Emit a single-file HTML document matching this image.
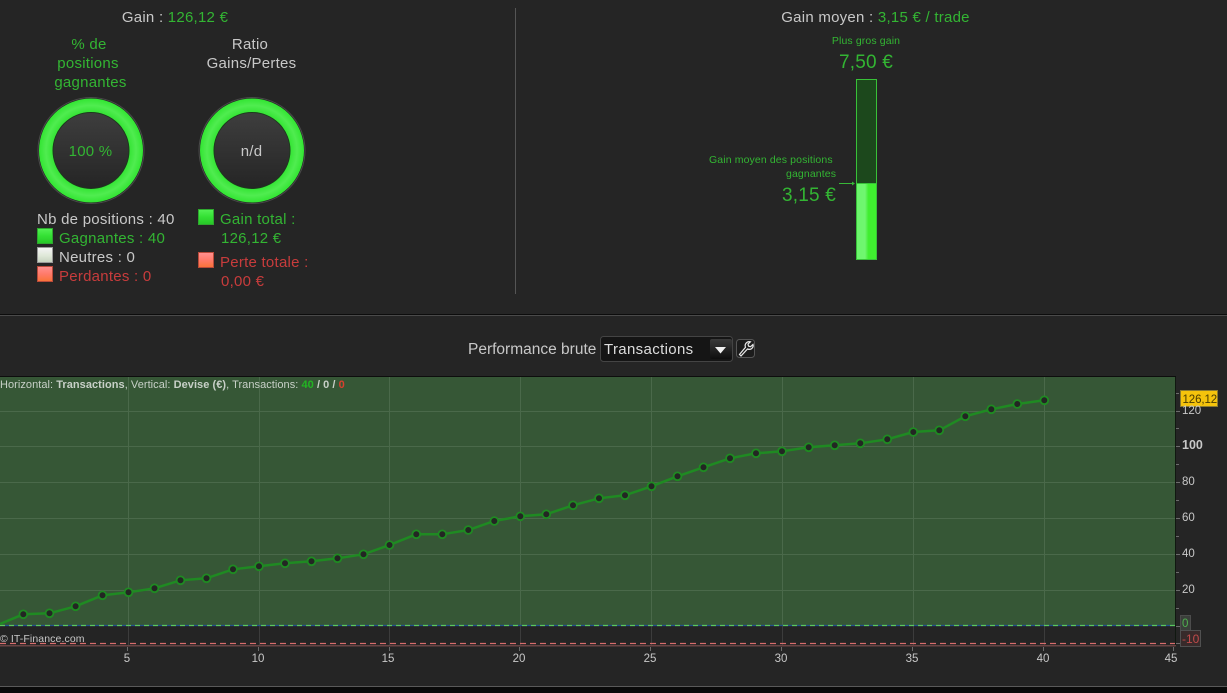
<!DOCTYPE html>
<html lang="fr"><head><meta charset="utf-8"><title>Performance</title>
<style>
html,body{margin:0;padding:0;background:#252525;}
body{position:relative;width:1227px;height:693px;overflow:hidden;font-family:"Liberation Sans",Arial,sans-serif;color:#c8c8c8;}
.t{position:absolute;white-space:nowrap;font-size:15px;line-height:19px;letter-spacing:.25px;}
.c{transform:translateX(-50%);}
.g{color:#33b533;}.w{color:#c8c8c8;}.d{color:#c83c3c;}
.sq{position:absolute;width:14px;height:14px;border:1px solid #333;}
.sg{background:linear-gradient(#52f052,#34e034 50%,#28c828);border-color:#2ea82e;}
.sw{background:linear-gradient(#f4f4f4,#dfe8d8 55%,#c8d4c0);border-color:#999;}
.sr{background:linear-gradient(#ff8f8f,#ff7a6a 50%,#f9743a);border-color:#b84a3a;}
.x{font-size:11.500px;line-height:13px;letter-spacing:0;top:653px;}
.y{font-size:11.500px;line-height:13px;letter-spacing:0;left:1182px;}
svg{position:absolute;left:0;top:0;}
</style></head><body>
<svg width="1227" height="693" viewBox="0 0 1227 693" xmlns="http://www.w3.org/2000/svg">
<defs>
<radialGradient id="ring" gradientUnits="userSpaceOnUse" cx="0" cy="0" r="53">
<stop offset=".72" stop-color="#34e434"/><stop offset=".85" stop-color="#50ec50"/><stop offset="1" stop-color="#2ee42e"/>
</radialGradient>
<linearGradient id="hub" x1="0" y1="0" x2="0" y2="1"><stop offset="0" stop-color="#3e3e3e"/><stop offset="1" stop-color="#252525"/></linearGradient>
<linearGradient id="bar" x1="0" y1="0" x2="1" y2="0"><stop offset="0" stop-color="#6cf66c"/><stop offset=".42" stop-color="#70f670"/><stop offset=".6" stop-color="#40ee30"/><stop offset="1" stop-color="#3ff02f"/></linearGradient>
<linearGradient id="btn" x1="0" y1="0" x2="0" y2="1"><stop offset="0" stop-color="#3a3a3a"/><stop offset="1" stop-color="#0e0e0e"/></linearGradient>
</defs>
<rect x="515" y="8" width="1" height="286" fill="#555"/>
<rect x="0" y="314" width="1227" height="1" fill="#0c0c0c"/>
<rect x="0" y="315" width="1227" height="1" fill="#4a4a4a"/>
<g transform="translate(91 150.500)"><circle r="53" fill="#222" stroke="#4a4a4a" stroke-width="1"/><circle r="52" fill="url(#ring)"/><circle r="38" fill="url(#hub)" stroke="#1c3a1c" stroke-width="1"/></g>
<g transform="translate(252 150.500)"><circle r="53" fill="#222" stroke="#4a4a4a" stroke-width="1"/><circle r="52" fill="url(#ring)"/><circle r="38" fill="url(#hub)" stroke="#1c3a1c" stroke-width="1"/></g>
<rect x="856.500" y="79.500" width="20" height="180" fill="#1c481c" stroke="#38c238"/>
<rect x="857" y="184" width="19" height="75" fill="url(#bar)"/>
<rect x="857" y="183" width="19" height="1" fill="#38c238"/>
<path d="M839 183.500H854" fill="none" stroke="#38b838" stroke-width="1"/>
<path d="M855 183.500l-3-2v4z" fill="#38b838"/>
<rect x="600.500" y="336.500" width="132" height="25" rx="3" fill="#151515" stroke="#444"/>
<rect x="710" y="339" width="22" height="20" rx="2" fill="url(#btn)"/>
<path d="M715 347h11l-5.500 6.500z" fill="#f0f0f0"/>
<rect x="736.500" y="339.500" width="18" height="18" rx="3" fill="#1c1c1c" stroke="#555"/>
<path d="M739.500 354.500l1.500 1.500 6.500-7c2 .7 4 .2 5-1.300.7-1 .8-2.200.5-3.200l-2.500 2.200-2-.6-.5-2 2.400-2.300c-1.500-.4-3-.1-4 1-1.200 1.200-1.500 3-.9 4.500z" fill="none" stroke="#e8e8e8" stroke-width="1.200"/>
<rect x="0" y="376" width="1176" height="1" fill="#0d0d0d"/>
<rect x="0" y="377" width="1175" height="249" fill="#365736"/>
<rect x="0" y="626" width="1175" height="19" fill="#242424"/>
<rect x="1175" y="377" width="1" height="270" fill="#101810"/>
<g stroke="#4a694a" stroke-width="1" fill="none">
<path d="M0 411.500H1175M0 446.500H1175M0 482.500H1175M0 518.500H1175M0 554.500H1175M0 590.500H1175"/>
<path d="M128.500 377V626M259.500 377V626M389.500 377V626M520.500 377V626M651.500 377V626M782.500 377V626M913.500 377V626M1044.500 377V626"/>
</g>
<g stroke="#3c3c3c" stroke-width="1" fill="none"><path d="M128.500 626V645M259.500 626V645M389.500 626V645M520.500 626V645M651.500 626V645M782.500 626V645M913.500 626V645M1044.500 626V645"/></g>
<path d="M0 625.500H1175" stroke="#24508c" stroke-width="1.200"/>
<path d="M0 625.500H1175" stroke="#5cc85c" stroke-width="1.200" stroke-dasharray="5 4"/>
<path d="M0 643.500H1175" stroke="#d86c6c" stroke-width="1.200" stroke-dasharray="6 4"/>
<rect x="0" y="645" width="1176" height="1.500" fill="#6a4545"/>
<g stroke="#6c6c6c" stroke-width="1" fill="none">
<path d="M127.500 647V651M258.500 647V651M389.500 647V651M519.500 647V651M650.500 647V651M781.500 647V651M912.500 647V651M1043.500 647V651M1173.500 647V651"/>
<path d="M1176 411.500H1180M1176 446.500H1180M1176 482.500H1180M1176 518.500H1180M1176 554.500H1180M1176 590.500H1180M1176 393.500H1179M1176 428.500H1179M1176 464.500H1179M1176 500.500H1179M1176 536.500H1179M1176 572.500H1179M1176 608.500H1179M1176 626.500H1180M1176 643.500H1180"/>
</g>
<polyline fill="none" stroke="#1f8a22" stroke-width="2.500" points="0,624 23.300,614.300 49.500,613.300 75.600,606.300 102.500,595.300 128.500,592.300 154.500,588.300 180.500,580.300 206.500,578.300 233,569.300 259,566.300 285,563.300 311.500,561.300 337.500,558.300 363.500,554.300 389.500,545 416.300,534.300 442.300,534.300 468.300,530 494.300,521 520.300,516.300 546.300,514.300 573,505.300 599,498.300 625,495.300 651.500,486.300 677.500,476.300 703.500,467.300 730,458.300 756,453.300 782,451.300 808.700,447.300 834.700,445.300 860.300,443.300 887.300,439.300 913.300,432 939.300,430.300 965.300,416.300 991.300,409.300 1017.300,404 1044.300,400.300"/>
<g fill="#232623" stroke="#1f8a22" stroke-width="1.800">
<circle cx="23.300" cy="614.300" r="3.900"/><circle cx="49.500" cy="613.300" r="3.900"/><circle cx="75.600" cy="606.300" r="3.900"/><circle cx="102.500" cy="595.300" r="3.900"/><circle cx="128.500" cy="592.300" r="3.900"/><circle cx="154.500" cy="588.300" r="3.900"/><circle cx="180.500" cy="580.300" r="3.900"/><circle cx="206.500" cy="578.300" r="3.900"/><circle cx="233" cy="569.300" r="3.900"/><circle cx="259" cy="566.300" r="3.900"/><circle cx="285" cy="563.300" r="3.900"/><circle cx="311.500" cy="561.300" r="3.900"/><circle cx="337.500" cy="558.300" r="3.900"/><circle cx="363.500" cy="554.300" r="3.900"/><circle cx="389.500" cy="545" r="3.900"/><circle cx="416.300" cy="534.300" r="3.900"/><circle cx="442.300" cy="534.300" r="3.900"/><circle cx="468.300" cy="530" r="3.900"/><circle cx="494.300" cy="521" r="3.900"/><circle cx="520.300" cy="516.300" r="3.900"/><circle cx="546.300" cy="514.300" r="3.900"/><circle cx="573" cy="505.300" r="3.900"/><circle cx="599" cy="498.300" r="3.900"/><circle cx="625" cy="495.300" r="3.900"/><circle cx="651.500" cy="486.300" r="3.900"/><circle cx="677.500" cy="476.300" r="3.900"/><circle cx="703.500" cy="467.300" r="3.900"/><circle cx="730" cy="458.300" r="3.900"/><circle cx="756" cy="453.300" r="3.900"/><circle cx="782" cy="451.300" r="3.900"/><circle cx="808.700" cy="447.300" r="3.900"/><circle cx="834.700" cy="445.300" r="3.900"/><circle cx="860.300" cy="443.300" r="3.900"/><circle cx="887.300" cy="439.300" r="3.900"/><circle cx="913.300" cy="432" r="3.900"/><circle cx="939.300" cy="430.300" r="3.900"/><circle cx="965.300" cy="416.300" r="3.900"/><circle cx="991.300" cy="409.300" r="3.900"/><circle cx="1017.300" cy="404" r="3.900"/><circle cx="1044.300" cy="400.300" r="3.900"/>
</g>
<rect x="1180.500" y="390.500" width="37" height="16" fill="#f5c30c" stroke="#8a7a30"/>
<rect x="1180.500" y="615.500" width="10" height="15" fill="#3a3f3a" stroke="#4c4c4c"/>
<rect x="1180.500" y="630.500" width="20" height="16" fill="#382a2a" stroke="#505050"/>
<rect x="0" y="686" width="1227" height="1" fill="#5a5a5a"/>
<rect x="0" y="687" width="1227" height="6" fill="#0a0a0a"/>
</svg>

<div class="t c" style="left:175px;top:8px">Gain : <span class="g">126,12 €</span></div>
<div class="t c g" style="left:89px;top:35px">% de</div>
<div class="t c g" style="left:88px;top:54px">positions</div>
<div class="t c g" style="left:90.500px;top:73px">gagnantes</div>
<div class="t c" style="left:250px;top:35px">Ratio</div>
<div class="t c" style="left:251.500px;top:54px">Gains/Pertes</div>
<div class="t c g" style="left:90.500px;top:142px">100 %</div>
<div class="t c" style="left:251.500px;top:142px">n/d</div>

<div class="t" style="left:37px;top:210px">Nb de positions : 40</div>
<div class="sq sg" style="left:37px;top:228px"></div>
<div class="t g" style="left:59px;top:229px">Gagnantes : 40</div>
<div class="sq sw" style="left:37px;top:247px"></div>
<div class="t" style="left:59px;top:248px">Neutres : 0</div>
<div class="sq sr" style="left:37px;top:266px"></div>
<div class="t d" style="left:59px;top:267px">Perdantes : 0</div>

<div class="sq sg" style="left:198px;top:209px"></div>
<div class="t g" style="left:220px;top:210px">Gain total :</div>
<div class="t g" style="left:221px;top:229px">126,12 €</div>
<div class="sq sr" style="left:198px;top:252px"></div>
<div class="t d" style="left:220px;top:253px">Perte totale :</div>
<div class="t d" style="left:221px;top:272px">0,00 €</div>

<div class="t c" style="left:875.500px;top:8px">Gain moyen : <span class="g">3,15 € / trade</span></div>
<div class="t c g" style="left:866px;top:32px;font-size:10.500px;letter-spacing:.12px">Plus gros gain</div>
<div class="t c g" style="left:866px;top:52px;font-size:19px;line-height:21px;letter-spacing:.2px">7,50 €</div>
<div class="t g" style="left:709px;top:151px;font-size:10.500px;letter-spacing:.12px">Gain moyen des positions</div>
<div class="t g" style="left:786px;top:165px;font-size:10.500px;letter-spacing:.12px">gagnantes</div>
<div class="t g" style="left:782px;top:185px;font-size:19px;line-height:21px;letter-spacing:.2px">3,15 €</div>

<div class="t" style="left:468px;top:340px;font-size:15.500px;letter-spacing:0">Performance brute</div>
<div class="t" style="left:604px;top:340px;font-size:15px;letter-spacing:.35px;color:#ddd">Transactions</div>

<div class="t" style="left:0;top:379px;font-size:11px;line-height:12px;letter-spacing:.05px;color:#c8d0c8">Horizontal: <b>Transactions</b>, Vertical: <b>Devise (€)</b>, Transactions: <b style="color:#22b522">40</b> <b>/ 0 /</b> <b style="color:#d8402f">0</b></div>
<div class="t" style="left:0;top:633px;font-size:10.500px;line-height:13px;letter-spacing:.1px;color:#c8c8c8">© IT-Finance.com</div>

<div class="t c x" style="left:127px">5</div>
<div class="t c x" style="left:258px">10</div>
<div class="t c x" style="left:388px">15</div>
<div class="t c x" style="left:519px">20</div>
<div class="t c x" style="left:650px">25</div>
<div class="t c x" style="left:781px">30</div>
<div class="t c x" style="left:912px">35</div>
<div class="t c x" style="left:1043px">40</div>
<div class="t c x" style="left:1171px">45</div>

<div class="t y" style="top:405px">120</div>
<div class="t y" style="top:438px;font-size:12.500px;line-height:14px;font-weight:bold">100</div>
<div class="t y" style="top:476px">80</div>
<div class="t y" style="top:512px">60</div>
<div class="t y" style="top:548px">40</div>
<div class="t y" style="top:584px">20</div>
<div class="t" style="left:1182.500px;top:393px;font-size:11.500px;line-height:14px;letter-spacing:-.1px;color:#4a3c00">126,12</div>
<div class="t y" style="top:618px;color:#4fb04f">0</div>
<div class="t y" style="top:633px;font-size:12px;color:#c04a4a">-10</div>
</body></html>
